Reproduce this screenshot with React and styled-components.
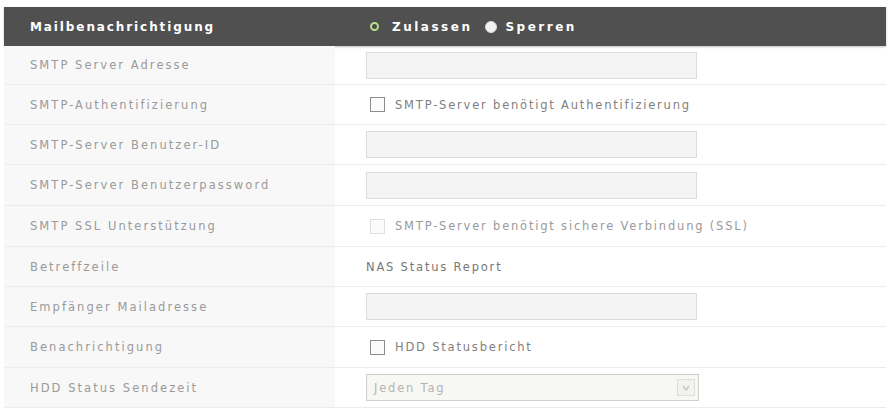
import styled, { createGlobalStyle } from "styled-components";

const GlobalStyle = createGlobalStyle`
  body {
    margin: 0;
    background: #ffffff;
    font-family: "DejaVu Sans", Verdana, sans-serif;
  }
`

const Panel = styled.div`
  width: 882px;
  margin: 7px 4px 0;
`

const Header = styled.div`
  display: grid;
  grid-template-columns: 331px 1fr;
  height: 39px;
  align-items: center;
  background: #505050;
  color: #ffffff;
  font-size: 12px;
  font-weight: bold;
  letter-spacing: 1.9px;
  box-shadow: 0 1px 2px rgba(0, 0, 0, 0.25);
`

const HeaderTitle = styled.div`
  padding-left: 26px;
`

const RadioGroup = styled.div`
  display: flex;
  align-items: center;
  padding-left: 35px;
  gap: 13px;
  letter-spacing: 2.5px;
`

const RadioItem = styled.label`
  display: flex;
  align-items: center;
  gap: ${p => (p.$wide ? 13 : 8)}px;
`

const RadioDot = styled.span`
  width: ${p => (p.$checked ? 9 : 12)}px;
  height: ${p => (p.$checked ? 9 : 12)}px;
  border-radius: 50%;
  box-sizing: border-box;
  background: ${p => (p.$checked ? "#4b4b4b" : "#f2f2f2")};
  border: ${p => (p.$checked ? "2.5px solid #b8e08a" : "1px solid #dddddd")};
`

const Row = styled.div`
  display: grid;
  grid-template-columns: 331px 1fr;
  height: ${p => p.$h || 40}px;
  border-bottom: 1px solid #ececec;
  box-sizing: border-box;
`

const Label = styled.div`
  display: flex;
  align-items: center;
  padding-left: 26px;
  background: #f8f8f8;
  color: #9a9a9a;
  font-size: 11.5px;
  letter-spacing: 2.05px;
`

const Value = styled.div`
  display: flex;
  align-items: center;
  padding-left: 31px;
  color: #8a8a8a;
  font-size: 11.5px;
  letter-spacing: 1.8px;
`

const TextBox = styled.div`
  width: 331px;
  height: 27px;
  box-sizing: border-box;
  background: #f4f4f4;
  border: 1px solid #dcdcdc;
`

const CheckRow = styled.label`
  display: flex;
  align-items: center;
  gap: 10px;
  color: ${p => (p.$disabled ? "#9a9a9a" : "#808080")};
`

const Box = styled.span`
  width: 15px;
  height: 15px;
  margin-left: 4px;
  box-sizing: border-box;
  background: #fbfbfb;
  border: 1px solid ${p => (p.$disabled ? "#dedede" : "#8c8c8c")};
`

const PlainText = styled.span`
  color: #777777;
`

const Select = styled.div`
  width: 333px;
  height: 27px;
  box-sizing: border-box;
  display: flex;
  align-items: center;
  justify-content: space-between;
  padding: 0 3px 0 7px;
  background: #f7f7f4;
  border: 1px solid #d0d0c8;
  color: #b4b4b4;
`

const Arrow = styled.span`
  width: 18px;
  height: 17px;
  box-sizing: border-box;
  border: 1px solid #dedede;
  background: #f2f2ee;
  display: flex;
  align-items: center;
  justify-content: center;
`

const rows = [
  { label: "SMTP Server Adresse", kind: "text", h: 39 },
  { label: "SMTP-Authentifizierung", kind: "check", text: "SMTP-Server benötigt Authentifizierung", h: 40 },
  { label: "SMTP-Server Benutzer-ID", kind: "text", h: 40 },
  { label: "SMTP-Server Benutzerpassword", kind: "text", h: 41 },
  { label: "SMTP SSL Unterstützung", kind: "check", disabled: true, text: "SMTP-Server benötigt sichere Verbindung (SSL)", h: 41 },
  { label: "Betreffzeile", kind: "plain", text: "NAS Status Report", h: 40 },
  { label: "Empfänger Mailadresse", kind: "text", h: 40 },
  { label: "Benachrichtigung", kind: "check", text: "HDD Statusbericht", h: 41 },
  { label: "HDD Status Sendezeit", kind: "select", text: "Jeden Tag", h: 40 },
]

function Field({ row }) {
  if (row.kind === "text") return <TextBox />
  if (row.kind === "check")
    return (
      <CheckRow $disabled={row.disabled}>
        <Box $disabled={row.disabled} />
        {row.text}
      </CheckRow>
    )
  if (row.kind === "select")
    return (
      <Select>
        {row.text}
        <Arrow>
          <svg width="8" height="6" viewBox="0 0 8 6">
            <path d="M1 1 L4 5 L7 1" fill="none" stroke="#c4c4c4" strokeWidth="1.3" />
          </svg>
        </Arrow>
      </Select>
    )
  return <PlainText>{row.text}</PlainText>
}

export default function App() {
  return (
    <>
      <GlobalStyle />
      <Panel>
        <Header>
          <HeaderTitle>Mailbenachrichtigung</HeaderTitle>
          <RadioGroup>
            <RadioItem $wide>
              <RadioDot $checked />
              Zulassen
            </RadioItem>
            <RadioItem>
              <RadioDot />
              Sperren
            </RadioItem>
          </RadioGroup>
        </Header>
        {rows.map(row => (
          <Row key={row.label} $h={row.h}>
            <Label>{row.label}</Label>
            <Value>
              <Field row={row} />
            </Value>
          </Row>
        ))}
      </Panel>
    </>
  )
}
